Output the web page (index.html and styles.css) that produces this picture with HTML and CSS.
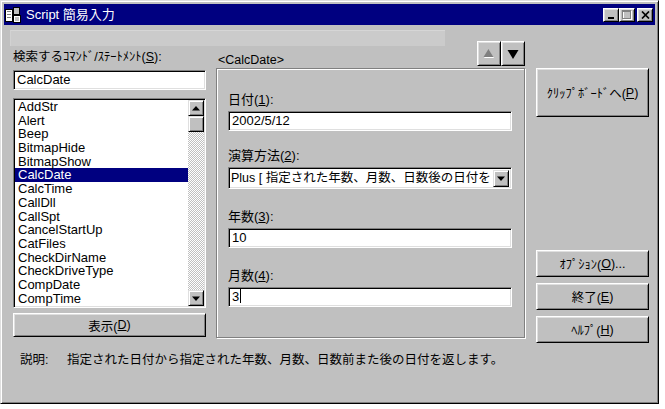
FILE: index.html
```html
<!DOCTYPE html>
<html lang="ja">
<head>
<meta charset="utf-8">
<title>Script 簡易入力</title>
<link rel="stylesheet" href="styles.css">
</head>
<body>
<div class="window">
  <div class="titlebar">
    <svg class="app-icon" width="16" height="16" viewBox="0 0 16 16">
      <rect x="0.5" y="2.5" width="7" height="12" fill="#fff" stroke="#000"/>
      <rect x="2" y="4" width="4" height="1" fill="#808080"/>
      <rect x="2" y="7" width="4" height="1" fill="#808080"/>
      <rect x="2" y="10" width="4" height="1" fill="#808080"/>
      <rect x="8.5" y="0.5" width="6" height="7" fill="#c0c0c0" stroke="#000"/>
      <rect x="8.5" y="8.5" width="7" height="7" fill="#fff" stroke="#000"/>
      <rect x="10" y="10" width="4" height="4" fill="#c0c0c0"/>
    </svg>
    <span class="title">Script 簡易入力</span>
    <div class="title-buttons">
      <span class="tbtn"><svg width="8" height="8" viewBox="0 0 8 8"><rect x="1" y="6" width="6" height="2" fill="#000"/></svg></span>
      <span class="tbtn"><svg width="10" height="10" viewBox="0 0 10 10"><rect x="1.5" y="1.5" width="8" height="8" fill="none" stroke="#fff"/><rect x="0.5" y="0.5" width="8" height="8" fill="none" stroke="#808080"/><rect x="0" y="0" width="9" height="2" fill="#808080"/></svg></span>
      <span class="tbtn close"><svg width="9" height="8" viewBox="0 0 9 8"><path d="M1 0.5l7 7M8 0.5l-7 7" stroke="#000" stroke-width="1.7"/></svg></span>
    </div>
  </div>

  <div class="strip"></div>

  <div class="main">
    <div class="col-left">
      <div class="lbl search-lbl">検索するｺﾏﾝﾄﾞ/ｽﾃｰﾄﾒﾝﾄ(<u>S</u>):</div>
      <div class="field search">CalcDate</div>
      <div class="listbox">
        <ul class="items">
          <li>AddStr</li>
          <li>Alert</li>
          <li>Beep</li>
          <li>BitmapHide</li>
          <li>BitmapShow</li>
          <li class="sel">CalcDate</li>
          <li>CalcTime</li>
          <li>CallDll</li>
          <li>CallSpt</li>
          <li>CancelStartUp</li>
          <li>CatFiles</li>
          <li>CheckDirName</li>
          <li>CheckDriveType</li>
          <li>CompDate</li>
          <li>CompTime</li>
        </ul>
        <div class="vscroll">
          <span class="sbtn"><svg width="8" height="5" viewBox="0 0 8 5"><path d="M4 0L8 4.5H0z" fill="#000"/></svg></span>
          <span class="sbtn thumb"></span>
          <span class="track"></span>
          <span class="sbtn"><svg width="8" height="5" viewBox="0 0 8 5"><path d="M0 0.5H8L4 5z" fill="#000"/></svg></span>
        </div>
      </div>
      <div class="btn show">表示(<u>D</u>)</div>
    </div>

    <div class="col-mid">
      <div class="mid-head">
        <span class="cmd-name">&lt;CalcDate&gt;</span>
        <div class="nav">
          <span class="btn nav-btn"><svg width="12" height="10" viewBox="0 0 12 10"><path d="M6 1L11 9H1z" fill="#fff"/><path d="M5.5 0L10.5 8H0.5z" fill="#808080"/></svg></span>
          <span class="btn nav-btn"><svg width="12" height="10" viewBox="0 0 12 10"><path d="M0.5 1H11.5L6 10z" fill="#000"/></svg></span>
        </div>
      </div>
      <div class="panel">
        <div class="grp">
          <div class="lbl">日付(<u>1</u>):</div>
          <div class="field wide">2002/5/12</div>
        </div>
        <div class="grp">
          <div class="lbl">演算方法(<u>2</u>):</div>
          <div class="field wide combo">
            <span class="combo-text">Plus [ 指定された年数、月数、日数後の日付を</span>
            <span class="sbtn combo-btn"><svg width="8" height="5" viewBox="0 0 8 5"><path d="M0 0.5H8L4 5z" fill="#000"/></svg></span>
          </div>
        </div>
        <div class="grp">
          <div class="lbl">年数(<u>3</u>):</div>
          <div class="field wide">10</div>
        </div>
        <div class="grp">
          <div class="lbl">月数(<u>4</u>):</div>
          <div class="field wide">3<span class="caret"></span></div>
        </div>
      </div>
    </div>

    <div class="col-right">
      <div class="btn clip">ｸﾘｯﾌﾟﾎﾞｰﾄﾞへ(<u>P</u>)</div>
      <div class="btn opt">ｵﾌﾟｼｮﾝ(<u>O</u>)...</div>
      <div class="btn rb">終了(<u>E</u>)</div>
      <div class="btn rb">ﾍﾙﾌﾟ(<u>H</u>)</div>
    </div>
  </div>

  <div class="desc">
    <span class="desc-key">説明:</span>
    <span class="desc-text">指定された日付から指定された年数、月数、日数前また後の日付を返します。</span>
  </div>
</div>
</body>
</html>
```

FILE: styles.css
```css
* { box-sizing: border-box; }

body {
  margin: 0;
  background: #fff;
  font-family: "Liberation Sans", "Noto Sans CJK JP", sans-serif;
  font-size: 12px;
  color: #000;
}

u { text-decoration: underline; text-underline-offset: 1px; }

.window {
  width: 659px;
  height: 404px;
  background: #c0c0c0;
  border: 1px solid;
  border-color: #dfdfdf #000 #000 #dfdfdf;
  box-shadow: inset 1px 1px #fff, inset -1px -1px #808080;
  padding: 3px;
  display: flex;
  flex-direction: column;
}

/* title bar */
.titlebar {
  height: 21px;
  background: #000080;
  color: #fff;
  display: flex;
  align-items: center;
  padding: 0 2px 0 1px;
}
.app-icon { flex: none; }
.title {
  margin-left: 5px;
  font-size: 13px;
  line-height: 16px;
}
.title-buttons {
  margin-left: auto;
  display: flex;
}
.tbtn {
  width: 16px;
  height: 14px;
  background: #c0c0c0;
  border: 1px solid;
  border-color: #fff #000 #000 #fff;
  box-shadow: inset 1px 1px #dfdfdf, inset -1px -1px #808080;
  display: flex;
  align-items: center;
  justify-content: center;
}
.tbtn.close { margin-left: 2px; }

/* faint strip */
.strip {
  margin: 5px 0 0 6px;
  width: 435px;
  height: 16px;
  background: #cbcbcb;
  border-top: 1px solid #d6d6d6;
  border-left: 1px solid #d2d2d2;
}

/* main layout */
.main {
  display: flex;
  margin-top: -5px;
  padding-left: 9px;
}

.lbl {
  height: 14px;
  line-height: 14px;
  white-space: nowrap;
  font-size: 13px;
}

.field {
  height: 20px;
  background: #fff;
  border: 1px solid;
  border-color: #808080 #fff #fff #808080;
  box-shadow: inset 1px 1px #000, inset -1px -1px #dfdfdf;
  padding: 0 3px;
  line-height: 18px;
  font-size: 13px;
  white-space: nowrap;
  overflow: hidden;
}

.btn {
  background: #c0c0c0;
  border: 1px solid;
  border-color: #fff #000 #000 #fff;
  box-shadow: inset 1px 1px #dfdfdf, inset -1px -1px #808080;
  display: flex;
  align-items: center;
  justify-content: center;
  font-size: 12.5px;
  white-space: nowrap;
}

.sbtn {
  width: 16px;
  height: 16px;
  flex: none;
  background: #c0c0c0;
  border: 1px solid;
  border-color: #dfdfdf #000 #000 #dfdfdf;
  box-shadow: inset 1px 1px #fff, inset -1px -1px #808080;
  display: flex;
  align-items: center;
  justify-content: center;
}

/* left column */
.col-left {
  width: 193px;
  display: flex;
  flex-direction: column;
}
.search-lbl {
  margin-top: 9px;
  height: 15px;
  line-height: 15px;
  font-size: 12.5px;
}
.search { margin-top: 5px; }

.listbox {
  margin-top: 8px;
  height: 210px;
  background: #fff;
  border: 1px solid;
  border-color: #808080 #fff #fff #808080;
  box-shadow: inset 1px 1px #000, inset -1px -1px #dfdfdf;
  padding: 1px;
  display: flex;
}
.items {
  list-style: none;
  margin: 0;
  padding: 0;
  flex: 1;
  overflow: hidden;
}
.items li {
  height: 13.7px;
  line-height: 13.7px;
  padding-left: 3px;
  font-size: 13px;
  white-space: nowrap;
}
.items li.sel {
  background: #000080;
  color: #fff;
}
.vscroll {
  width: 16px;
  display: flex;
  flex-direction: column;
}
.track {
  flex: 1;
  background: repeating-conic-gradient(#c0c0c0 0 25%, #fff 0 50%) 0 0 / 2px 2px;
}

.show {
  margin-top: 5px;
  height: 24px;
}

/* middle column */
.col-mid {
  width: 309px;
  margin-left: 10px;
  display: flex;
  flex-direction: column;
}
.mid-head {
  height: 27px;
  display: flex;
  align-items: flex-end;
}
.cmd-name {
  padding-left: 2px;
  margin-bottom: 1px;
  line-height: 14px;
  font-size: 12.5px;
}
.nav {
  margin-left: auto;
  align-self: flex-start;
  display: flex;
}
.nav-btn {
  width: 24px;
  height: 25px;
}

.panel {
  height: 270px;
  border: 1px solid #808080;
  box-shadow: inset 1px 1px #fff, 1px 1px #fff;
  padding: 24px 0 0 11px;
}
.grp .lbl { margin-bottom: 4px; }
.grp + .grp { margin-top: 21px; }
.grp:nth-child(2) { margin-top: 18px; }
.wide { width: 284px; }
.combo {
  height: 22px;
  display: flex;
  align-items: center;
  padding: 0 2px;
  font-size: 12.5px;
}
.combo-text {
  flex: 1;
  min-width: 0;
  overflow: hidden;
  white-space: nowrap;
  line-height: 18px;
}
.combo-btn {
  width: 16px;
  height: 17px;
  margin-left: 1px;
}
.caret {
  display: inline-block;
  width: 1px;
  height: 14px;
  background: #000;
  vertical-align: -2px;
  margin-left: 1px;
}

/* right column */
.col-right {
  width: 113px;
  margin-left: 11px;
  display: flex;
  flex-direction: column;
}
.clip {
  margin-top: 27px;
  height: 49px;
}
.opt {
  margin-top: 133px;
  height: 27px;
}
.rb {
  margin-top: 6px;
  height: 27px;
}

/* description */
.desc {
  margin-top: 10px;
  padding-left: 16px;
  display: flex;
  line-height: 14px;
  font-size: 12.5px;
  white-space: nowrap;
}
.desc-key { width: 47px; }
```
